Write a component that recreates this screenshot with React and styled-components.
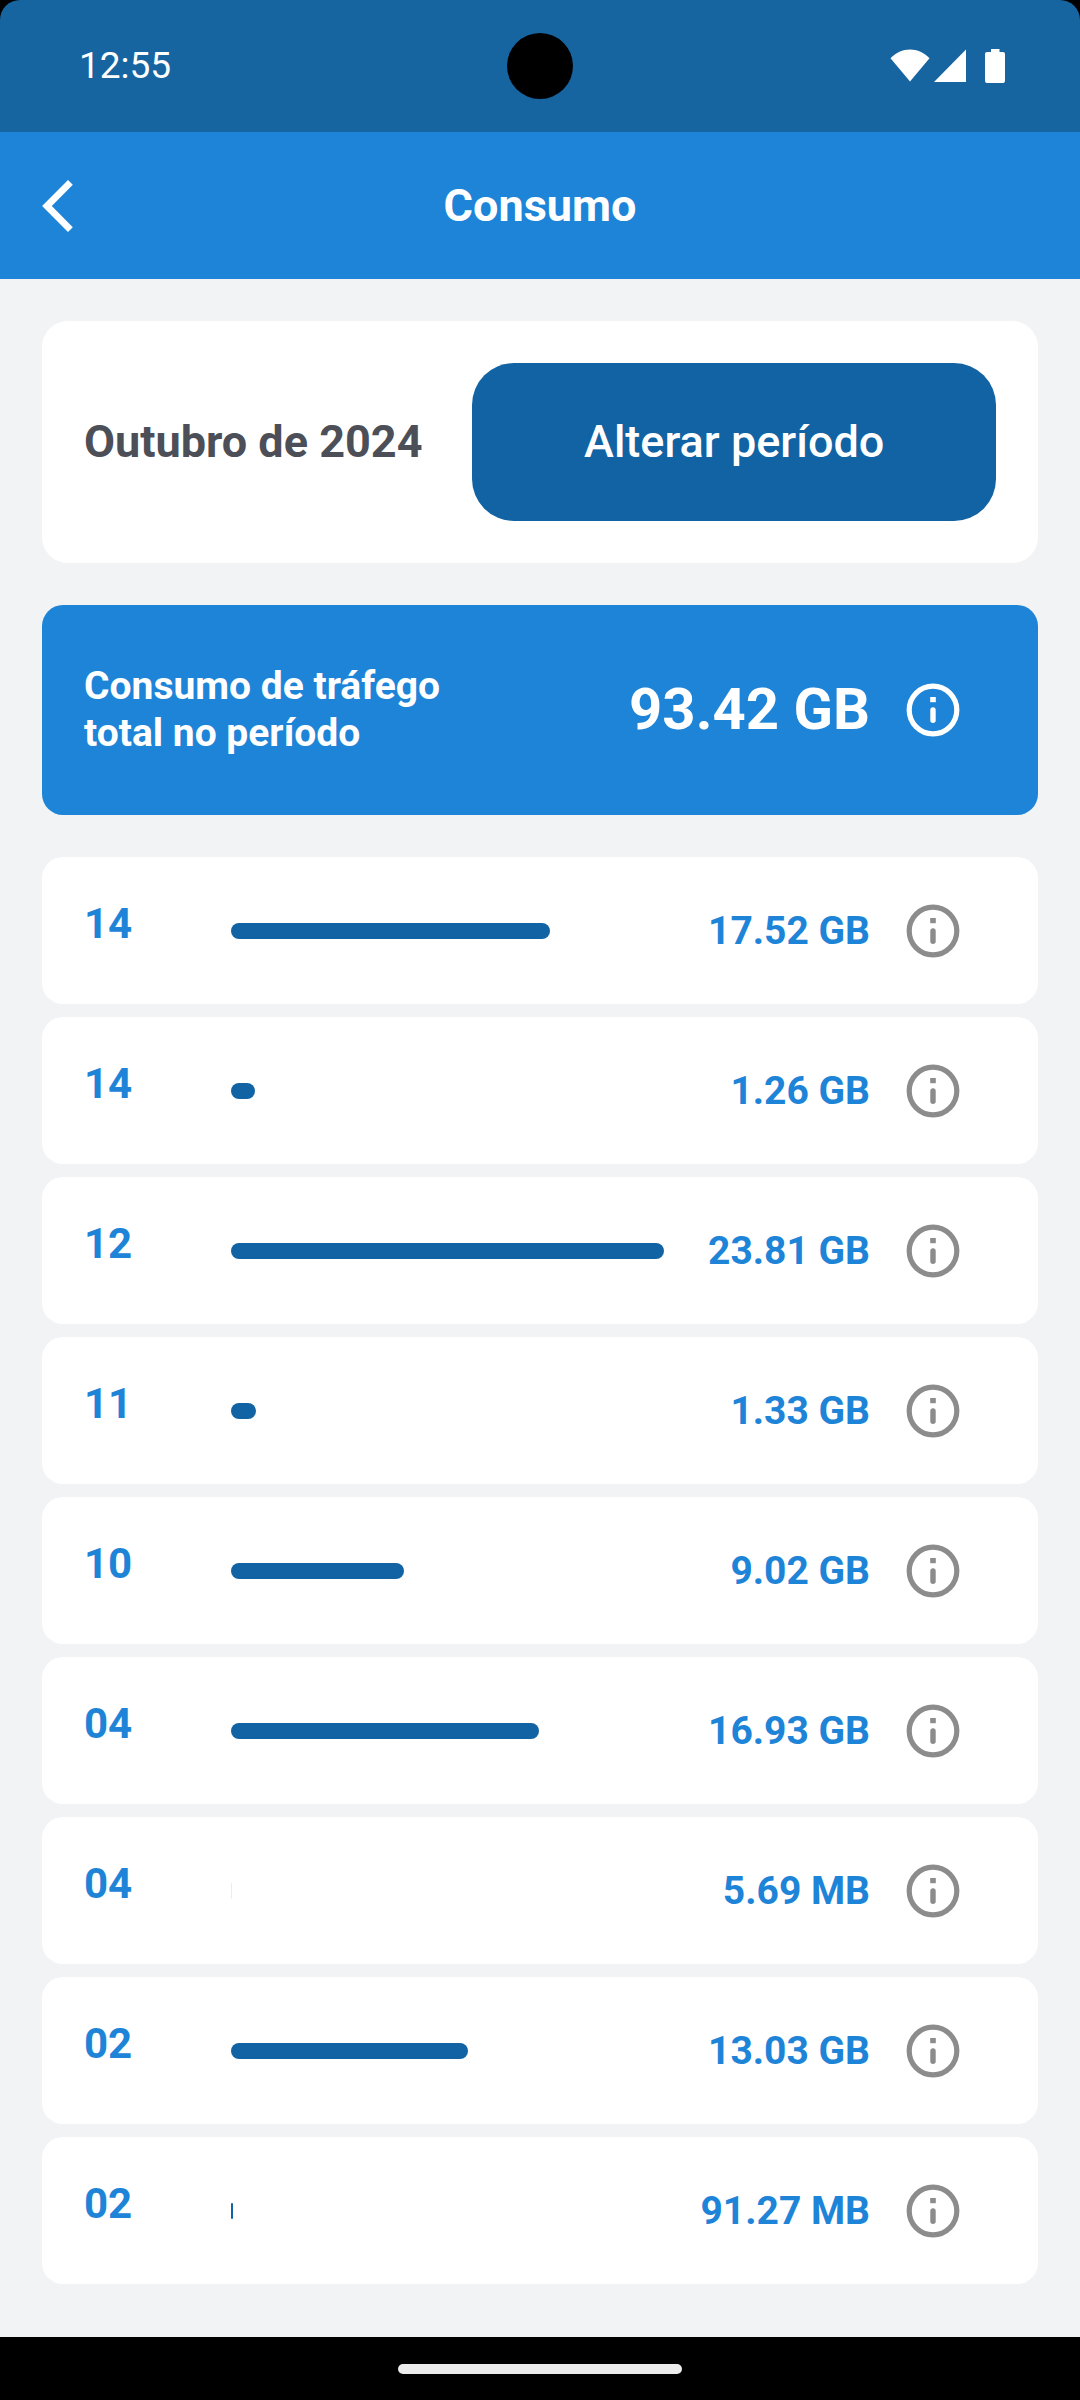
import styled, { createGlobalStyle, css } from "styled-components"

const colors = {
  primary: "#1e84d8",
  dark: "#1163a3",
  status: "#1664a0",
  background: "#f2f3f5",
  text: "#4c4f57",
  icon: "#8c8c8c",
}

const GlobalStyle = createGlobalStyle`
* { box-sizing: border-box; }
body {
  margin: 0;
  background: #000;
  font-family: Roboto, "Liberation Sans", sans-serif;
}
button {
  padding: 0;
  border: 0;
  font-family: inherit;
  cursor: pointer;
}
svg { display: block; }
`

const Screen = styled.div`
min-height: 100vh;
display: flex;
flex-direction: column;
`

const threeColumns = css`
display: grid;
grid-template-columns: 1fr auto 1fr;
align-items: center;
`

const StatusBar = styled.div`
${threeColumns}
height: 132px;
padding: 0 75px;
background: ${colors.status};
border-radius: 20px 20px 0 0;
color: #fff;
`

const Clock = styled.time`
padding-left: 4px;
font-size: 37px;
line-height: 48px;
`

const Camera = styled.div`
width: 66px;
height: 66px;
border-radius: 50%;
background: #000;
`

const StatusIcons = styled.div`
display: flex;
justify-content: flex-end;
align-items: center;
gap: 4px;
`

const Battery = styled.svg`
margin-left: 15px;
`

const Header = styled.header`
${threeColumns}
height: 147px;
padding: 0 42px;
background: ${colors.primary};
color: #fff;
`

const BackButton = styled.button`
justify-self: start;
background: none;
color: inherit;
`

const Title = styled.h1`
margin: 0;
font-size: 45px;
font-weight: 700;
line-height: 52px;
`

const Content = styled.main`
flex: 1;
display: flex;
flex-direction: column;
gap: 42px;
padding: 42px 42px 52px;
background: ${colors.background};
`

const PeriodCard = styled.section`
display: flex;
align-items: center;
gap: 50px;
padding: 42px;
border-radius: 26px;
background: #fff;
`

const Period = styled.h2`
margin: 0;
color: ${colors.text};
font-size: 45px;
font-weight: 700;
line-height: 52px;
`

const PeriodButton = styled.button`
flex: 1;
height: 158px;
border-radius: 42px;
background: ${colors.dark};
color: #fff;
font-size: 45px;
font-weight: 500;
line-height: 52px;
`

const TotalCard = styled.section`
display: flex;
align-items: center;
height: 210px;
padding: 0 42px;
border-radius: 21px;
background: ${colors.primary};
color: #fff;
`

const TotalLabel = styled.p`
width: 400px;
margin: 0;
font-size: 39px;
font-weight: 700;
line-height: 47px;
`

const TotalValue = styled.strong`
flex: 1;
padding-bottom: 2px;
text-align: right;
font-size: 58px;
font-weight: 700;
line-height: 68px;
`

const InfoButton = styled.button`
display: flex;
justify-content: center;
width: 126px;
background: none;
color: ${({ $light }) => ($light ? "#fff" : colors.icon)};
`

const DayList = styled.ul`
display: flex;
flex-direction: column;
gap: 13px;
margin: 0;
padding: 0;
list-style: none;
`

const DayRow = styled.li`
display: flex;
align-items: center;
height: 147px;
padding: 0 42px;
border-radius: 21px;
background: #fff;
color: ${colors.primary};
font-weight: 700;
line-height: 48px;
`

const Day = styled.span`
width: 147px;
padding-bottom: 13px;
font-size: 42px;
`

const Track = styled.div`
flex: 1;
`

// a bar thinner than a pixel is only hinted at
const Bar = styled.div`
height: 16px;
border-radius: 8px;
background: ${colors.dark};
opacity: ${({ $faint }) => ($faint ? 0.1 : 1)};
`

const Amount = styled.span`
width: 206px;
font-size: 39px;
text-align: right;
white-space: nowrap;
`

const NavBar = styled.footer`
display: flex;
align-items: center;
justify-content: center;
height: 63px;
background: #000;
`

const Handle = styled.div`
width: 284px;
height: 10px;
border-radius: 5px;
background: #ececec;
`

// share: percentage of the busiest day
const days = [
  { day: "14", amount: "17.52 GB", share: 73.6 },
  { day: "14", amount: "1.26 GB", share: 5.5 },
  { day: "12", amount: "23.81 GB", share: 100 },
  { day: "11", amount: "1.33 GB", share: 5.8 },
  { day: "10", amount: "9.02 GB", share: 39.9 },
  { day: "04", amount: "16.93 GB", share: 71.1 },
  { day: "04", amount: "5.69 MB", share: 0.02 },
  { day: "02", amount: "13.03 GB", share: 54.7 },
  { day: "02", amount: "91.27 MB", share: 0.4 },
]

function Info({ label, light }) {
  return (
    <InfoButton type="button" aria-label={label} $light={light}>
      <svg width="64" height="64" viewBox="0 0 64 64" fill="currentColor">
        <circle cx="32" cy="32" r="23.8" fill="none" stroke="currentColor" strokeWidth="5.2" />
        <rect x="29.2" y="19" width="5.6" height="5.2" />
        <rect x="29.3" y="29.2" width="5.4" height="15.8" rx="2.7" />
      </svg>
    </InfoButton>
  )
}

export default function App() {
  return (
    <Screen>
      <GlobalStyle />
      <StatusBar>
        <Clock>12:55</Clock>
        <Camera />
        <StatusIcons>
          <svg width="40" height="34" viewBox="0 0 40 34" fill="#fff">
            <path d="M20 32.6 0.5 9.3C6 3.5 12.5 0.5 20 0.5S34 3.5 39.5 9.3Z" />
          </svg>
          <svg width="32" height="34" viewBox="0 0 32 34" fill="#fff">
            <path d="M32 0.5V33H0Z" />
          </svg>
          <Battery width="20" height="34" viewBox="0 0 20 34" fill="#fff">
            <path d="M6 0h8.500v3H18a2 2 0 0 1 2 2v27a2 2 0 0 1-2 2H2a2 2 0 0 1-2-2V5a2 2 0 0 1 2-2h4Z" />
          </Battery>
        </StatusIcons>
      </StatusBar>
      <Header>
        <BackButton type="button" aria-label="Voltar">
          <svg width="31" height="52" viewBox="0 0 31 52" fill="none">
            <path d="M28.4 2.4 4.9 26l23.5 23.6" stroke="currentColor" strokeWidth="6.8" />
          </svg>
        </BackButton>
        <Title>Consumo</Title>
      </Header>
      <Content>
        <PeriodCard>
          <Period>Outubro de 2024</Period>
          <PeriodButton type="button">Alterar período</PeriodButton>
        </PeriodCard>
        <TotalCard>
          <TotalLabel>Consumo de tráfego total no período</TotalLabel>
          <TotalValue>93.42 GB</TotalValue>
          <Info label="Detalhes do total" light />
        </TotalCard>
        <DayList>
          {days.map(({ day, amount, share }, index) => (
            <DayRow key={index}>
              <Day>{day}</Day>
              <Track>
                <Bar $faint={share < 0.1} style={{ width: `${share}%` }} />
              </Track>
              <Amount>{amount}</Amount>
              <Info label={`Detalhes do dia ${day}`} />
            </DayRow>
          ))}
        </DayList>
      </Content>
      <NavBar>
        <Handle />
      </NavBar>
    </Screen>
  )
}
